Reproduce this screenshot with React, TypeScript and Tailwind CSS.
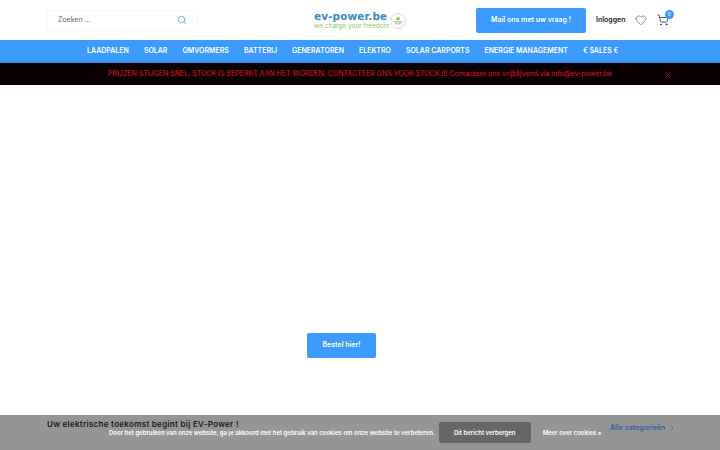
import { Search, Heart, ShoppingCart, X, ChevronRight } from "lucide-react";

const navItems = [
  "LAADPALEN",
  "SOLAR",
  "OMVORMERS",
  "BATTERIJ",
  "GENERATOREN",
  "ELEKTRO",
  "SOLAR CARPORTS",
  "ENERGIE MANAGEMENT",
  "€ SALES €",
];

export default function App() {
  return (
    <div className="relative h-[450px] w-[720px] overflow-hidden bg-white font-['Inter',sans-serif]">
      <header className="flex h-10 items-center pl-[47px]">
        <div className="flex h-[21px] w-[151px] items-center justify-between border border-[#f7f7f7] pl-[10px] pr-[10px] text-[7px] text-[#666]">
          <span>Zoeken ...</span>
          <Search size={10} strokeWidth={1.5} className="text-[#3d8fd6]" />
        </div>
        <div className="ml-[116px] flex w-[92px] items-center gap-[4px] whitespace-nowrap">
          <div className="flex w-[72px] flex-col">
            <span className="font-['DejaVu_Sans',sans-serif] text-[10.5px] leading-[12px] font-bold tracking-[0.1px] text-[#3a8cc4]">
              ev-power.be
            </span>
            <span className="text-[6.5px] leading-[8px] text-[#93c456]">we charge your freedom</span>
          </div>
          <svg width="16" height="16" viewBox="0 0 17 17" className="mt-[2px] shrink-0">
            <circle cx="8.5" cy="8.5" r="7.8" fill="#fff" stroke="#c4cfc4" strokeWidth="0.8" />
            <circle cx="8.5" cy="6" r="1.8" fill="#8fbc45" />
            <rect x="4" y="9" width="9" height="1" fill="#8a9a8a" />
            <rect x="5" y="11" width="7" height="1" fill="#a5b5a5" />
          </svg>
        </div>
        <button className="ml-[70px] h-[25px] w-[110px] rounded-[2px] bg-[#3b9bff] text-[7px] font-semibold text-white">
          Mail ons met uw vraag !
        </button>
        <span className="ml-[10px] text-[7px] font-semibold text-[#222]">Inloggen</span>
        <Heart size={12} strokeWidth={1.1} className="ml-[9px] text-[#333]" />
        <div className="relative ml-[10px]">
          <ShoppingCart size={12} strokeWidth={1.6} className="text-[#333]" />
          <span className="absolute -top-[4px] -right-[5px] flex h-[9px] w-[9px] items-center justify-center rounded-full bg-[#3b9bff] text-[5px] text-white">
            0
          </span>
        </div>
      </header>

      <nav className="flex h-[23px] items-center gap-[15px] border-b border-[#2f86e0] bg-[#3b9bff] pl-[87px] text-[7px] font-semibold text-white">
        {navItems.map((item) => (
          <span key={item}>{item}</span>
        ))}
      </nav>

      <div className="relative flex h-[22px] items-center bg-[#0a0005] pl-[108px] text-[7px] text-[#e0141f]">
        <span>
          PRIJZEN STIJGEN SNEL, STOCK IS BEPERKT AAN HET WORDEN, CONTACTEER ONS VOOR STOCK !!! Contacteer ons vrijblijvend via info@ev-power.be
        </span>
        <X size={9} strokeWidth={1.6} className="absolute left-[664px] text-[#e0202a]" />
      </div>

      <main className="flex flex-col">
        <button className="mt-[248px] ml-[307px] h-[25px] w-[69px] rounded-[2px] bg-[#3b9bff] text-[7px] font-semibold text-white">
          Bestel hier!
        </button>
      </main>

      <div className="absolute right-0 bottom-0 left-0 flex h-[35px] items-center bg-[#959595] pl-[109px] text-[6px] font-semibold text-white">
        <span>Door het gebruiken van onze website, ga je akkoord met het gebruik van cookies om onze website te verbeteren.</span>
        <button className="ml-[4px] h-[21px] w-[92px] rounded-[2px] bg-[#666] text-[6px] font-semibold text-white">
          Dit bericht verbergen
        </button>
        <span className="ml-[12px]">Meer over cookies »</span>
      </div>

      <h2 className="absolute top-[418px] left-[47px] text-[8px] leading-[12px] font-semibold tracking-[0.3px] text-[#1a1a1a]">
        Uw elektrische toekomst begint bij EV-Power !
      </h2>
      <span className="absolute top-[423px] left-[610px] flex items-center gap-[3px] text-[7px] leading-[10px] font-semibold text-[#2f639c]">
        Alle categorieën <ChevronRight size={8} />
      </span>
    </div>
  );
}
